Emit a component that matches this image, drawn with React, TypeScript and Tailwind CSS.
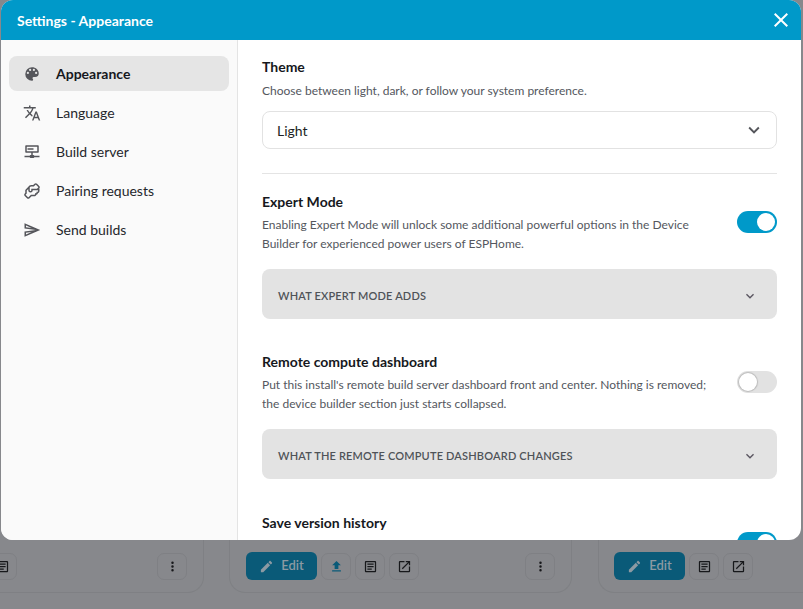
const P = {
  palette: "M17.5,12A1.5,1.5 0 0,1 16,10.5A1.5,1.5 0 0,1 17.5,9A1.5,1.5 0 0,1 19,10.5A1.5,1.5 0 0,1 17.5,12M14.5,8A1.5,1.5 0 0,1 13,6.5A1.5,1.5 0 0,1 14.5,5A1.5,1.5 0 0,1 16,6.5A1.5,1.5 0 0,1 14.5,8M9.5,8A1.5,1.5 0 0,1 8,6.5A1.5,1.5 0 0,1 9.5,5A1.5,1.5 0 0,1 11,6.5A1.5,1.5 0 0,1 9.5,8M6.5,12A1.5,1.5 0 0,1 5,10.5A1.5,1.5 0 0,1 6.5,9A1.5,1.5 0 0,1 8,10.5A1.5,1.5 0 0,1 6.5,12M12,3A9,9 0 0,0 3,12A9,9 0 0,0 12,21A1.5,1.5 0 0,0 13.5,19.5C13.5,19.11 13.35,18.76 13.11,18.5C12.88,18.23 12.73,17.88 12.73,17.5A1.5,1.5 0 0,1 14.23,16H16A5,5 0 0,0 21,11C21,6.58 16.97,3 12,3Z",
  translate: "M12.87,15.07L10.33,12.56L10.36,12.53C12.1,10.59 13.34,8.36 14.07,6H17V4H10V2H8V4H1V6H12.17C11.5,7.92 10.44,9.75 9,11.35C8.07,10.32 7.3,9.19 6.69,8H4.69C5.42,9.63 6.42,11.17 7.67,12.56L2.58,17.58L4,19L9,14L12.11,17.11L12.87,15.07M18.5,10H16.5L12,22H14L15.12,19H19.87L21,22H23L18.5,10M15.88,17L17.5,12.67L19.12,17H15.88Z",
  server: "M4,3H20A1,1 0 0,1 21,4V12A1,1 0 0,1 20,13H13V16H14A1,1 0 0,1 15,17H22V19H15A1,1 0 0,1 14,20H10A1,1 0 0,1 9,19H2V17H9A1,1 0 0,1 10,16H11V13H4A1,1 0 0,1 3,12V4A1,1 0 0,1 4,3M5,5V11H19V5H5M6,7H14V9H6V7Z",
  handshake: "M21.71 8.71C22.96 7.46 22.39 6 21.71 5.29L18.71 2.29C17.45 1.04 16 1.61 15.29 2.29L13.59 4H11C9.1 4 8 5 7.44 6.15L3 10.59V14.59L2.29 15.29C1.04 16.55 1.61 18 2.29 18.71L5.29 21.71C5.83 22.25 6.41 22.45 6.96 22.45C7.67 22.45 8.32 22.1 8.71 21.71L11.41 19H15C16.7 19 17.56 17.94 17.87 16.9C19 16.6 19.62 15.74 19.87 14.9C21.42 14.5 22 13.03 22 12V9H21.41L21.71 8.71M20 12C20 12.45 19.81 13 19 13L18 13L18 14C18 14.45 17.81 15 17 15L16 15L16 16C16 16.45 15.81 17 15 17H10.59L7.31 20.28C7 20.57 6.82 20.4 6.71 20.29L3.72 17.31C3.43 17 3.6 16.82 3.71 16.71L5 15.41V11.41L7 9.41V11C7 12.21 7.8 14 10 14S13 12.21 13 11H20V12M20.29 7.29L18.59 9H11V11C11 11.45 10.81 12 10 12S9 11.45 9 11V8C9 7.54 9.17 6 11 6H14.41L16.69 3.72C17 3.43 17.18 3.6 17.29 3.71L20.28 6.69C20.57 7 20.4 7.18 20.29 7.29Z",
  send: "M4 6.03L11.5 9.25L4 8.25L4 6.03M11.5 14.75L4 17.97V15.75L11.5 14.75M2 3V10L17 12L2 14V21L23 12L2 3Z",
  pencil: "M20.71,7.04C21.1,6.65 21.1,6 20.71,5.63L18.37,3.29C18,2.9 17.35,2.9 16.96,3.29L15.12,5.12L18.87,8.87M3,17.25V21H6.75L17.81,9.93L14.06,6.18L3,17.25Z",
  upload: "M9,16V10H5L12,3L19,10H15V16H9M5,20V18H19V20H5Z",
  dots: "M12,16A2,2 0 0,1 14,18A2,2 0 0,1 12,20A2,2 0 0,1 10,18A2,2 0 0,1 12,16M12,10A2,2 0 0,1 14,12A2,2 0 0,1 12,14A2,2 0 0,1 10,12A2,2 0 0,1 12,10M12,4A2,2 0 0,1 14,6A2,2 0 0,1 12,8A2,2 0 0,1 10,6A2,2 0 0,1 12,4Z",
  open: "M14,3V5H17.59L7.76,14.83L9.17,16.24L19,6.41V10H21V3M19,19H5V5H12V3H5C3.89,3 3,3.9 3,5V19A2,2 0 0,0 5,21H19A2,2 0 0,0 21,19V12H19V19Z",
  doc: "M5,3C3.89,3 3,3.89 3,5V19C3,20.11 3.89,21 5,21H19C20.11,21 21,20.11 21,19V5C21,3.89 20.11,3 19,3H5M5,5H19V19H5V5M7,7V9H17V7H7M7,11V13H17V11H7M7,15V17H14V15H7Z",
  close: "M19,6.41L17.59,5L12,10.59L6.41,5L5,6.41L10.59,12L5,17.59L6.41,19L12,13.41L17.59,19L19,17.59L13.41,12L19,6.41Z",
  chevron: "M7.41,8.58L12,13.17L16.59,8.58L18,10L12,16L6,10L7.41,8.58Z",
};

function Icon({ d, className }: { d: string; className?: string }) {
  return (
    <svg viewBox="0 0 24 24" fill="currentColor" className={className}>
      <path d={d} />
    </svg>
  );
}

function IconBtn({ d, color = "text-[#17181b]" }: { d: string; color?: string }) {
  return (
    <div className={`w-[30px] h-[27px] rounded-[7px] border border-[#7f8084] flex items-center justify-center ${color}`}>
      <Icon d={d} className="w-[15px] h-[15px]" />
    </div>
  );
}

function EditBtn() {
  return (
    <div className="w-[71px] h-[28px] rounded-[6px] bg-[#0a5a78] text-[#8c9aa3] flex items-center justify-center gap-[7px] text-[13px] font-semibold">
      <Icon d={P.pencil} className="w-[15px] h-[15px]" />
      <span>Edit</span>
    </div>
  );
}

const nav = [
  { label: "Appearance", d: P.palette, active: true },
  { label: "Language", d: P.translate },
  { label: "Build server", d: P.server },
  { label: "Pairing requests", d: P.handshake },
  { label: "Send builds", d: P.send },
];

function Toggle({ on }: { on: boolean }) {
  return (
    <div
      className={`w-10 h-[22px] shrink-0 rounded-full flex items-center px-[2px] ${
        on ? "bg-[#0099c9] justify-end" : "bg-[#e2e2e2] justify-start"
      }`}
    >
      <div className={`w-[18px] h-[18px] rounded-full bg-white ${on ? "" : "shadow-[0_0_1px_1px_#bbbbbb]"}`} />
    </div>
  );
}

function Disclosure({ label }: { label: string }) {
  return (
    <div className="h-[50px] mt-[16px] rounded-[8px] bg-[#e3e3e3] pl-4 pr-[19px] flex items-center justify-between">
      <span className="text-[11px] font-semibold tracking-[0.17px] text-[#4f5358] pt-[5px]">{label}</span>
      <Icon d={P.chevron} className="w-4 h-4 text-[#5a5560] mt-[3px]" />
    </div>
  );
}

function Setting({ title, lines, on }: { title: string; lines: string[]; on: boolean }) {
  return (
    <div className="flex justify-between items-start gap-4">
      <div className="flex-1 min-w-0">
        <div className="text-[14px] leading-[20px] font-bold text-[#16181d]">{title}</div>
        <div className="text-[12px] leading-[19px] text-[#54575e] mt-[3px]">
          {lines.map((l) => (
            <div key={l} className="whitespace-nowrap">{l}</div>
          ))}
        </div>
      </div>
      <div className="pt-[19px]">
        <Toggle on={on} />
      </div>
    </div>
  );
}

export default function App() {
  return (
    <div
      className="relative w-[803px] h-[609px] overflow-hidden bg-[#87888c] flex items-end pb-[16px]"
      style={{ fontFamily: 'Lato, sans-serif' }}
    >
      {/* page behind the dialog */}
      <div className="w-[204px] h-[70px] shrink-0 border-r border-b border-[#7f8084] rounded-br-[16px] flex items-end justify-between pb-[12px] pr-[16px]">
        <div className="ml-[-13px]"><IconBtn d={P.doc} /></div>
        <IconBtn d={P.dots} />
      </div>
      <div className="w-[343px] h-[70px] ml-[25px] shrink-0 border-x border-b border-[#7f8084] rounded-b-[16px] flex items-end pb-[12px] pl-[16px] pr-[16px] gap-[4px]">
        <EditBtn />
        <IconBtn d={P.upload} color="text-[#0a5a78]" />
        <IconBtn d={P.doc} />
        <IconBtn d={P.open} />
        <div className="ml-auto"><IconBtn d={P.dots} /></div>
      </div>
      <div className="w-[220px] h-[70px] ml-[26px] shrink-0 border-l border-b border-[#7f8084] rounded-bl-[16px] flex items-end pb-[12px] pl-[15px] gap-[4px]">
        <EditBtn />
        <IconBtn d={P.doc} />
        <IconBtn d={P.open} />
      </div>

      {/* dialog */}
      <div className="absolute left-[1px] top-0 w-[800px] h-[540px] rounded-[12px] overflow-hidden bg-white flex flex-col">
        <div className="h-[40px] shrink-0 bg-[#0099c9] text-white flex items-center justify-between pl-4 pr-[8px]">
          <span className="text-[14px] font-bold">Settings - Appearance</span>
          <Icon d={P.close} className="w-6 h-6" />
        </div>
        <div className="flex-1 flex min-h-0">
          <div className="w-[237px] shrink-0 bg-[#fafafa] border-r border-[#e4e4e4] pl-2 pr-2 pt-4 flex flex-col gap-[4px]">
            {nav.map((n) => (
              <div
                key={n.label}
                className={`h-[35px] rounded-[8px] pl-[14px] flex items-center gap-[15px] text-[14px] ${
                  n.active ? "bg-[#e5e5e5] font-bold text-[#16181d]" : "text-[#25272c]"
                }`}
              >
                <Icon d={n.d} className="w-[18px] h-[18px] text-[#55565b] shrink-0" />
                <span>{n.label}</span>
              </div>
            ))}
          </div>
          <div className="flex-1 min-w-0 overflow-hidden pl-[24px] pr-[24px] pt-[17px]">
            <div className="text-[14px] leading-[20px] font-bold text-[#16181d]">Theme</div>
            <div className="text-[12px] leading-[19px] text-[#54575e] mt-[4px]">
              Choose between light, dark, or follow your system preference.
            </div>
            <div className="mt-[11px] h-[38px] rounded-[8px] border border-[#e2e2e2] pl-[14px] pr-[11px] flex items-center justify-between text-[14px] text-[#1d1f24]">
              <span>Light</span>
              <Icon d={P.chevron} className="w-[22px] h-[22px] text-[#55565b]" />
            </div>
            <div className="h-px bg-[#e4e4e4] mt-[24px] mb-[18px]" />
            <Setting
              title="Expert Mode"
              on
              lines={[
                "Enabling Expert Mode will unlock some additional powerful options in the Device",
                "Builder for experienced power users of ESPHome.",
              ]}
            />
            <Disclosure label="WHAT EXPERT MODE ADDS" />
            <div className="h-[33px]" />
            <Setting
              title="Remote compute dashboard"
              on={false}
              lines={[
                "Put this install's remote build server dashboard front and center. Nothing is removed;",
                "the device builder section just starts collapsed.",
              ]}
            />
            <Disclosure label="WHAT THE REMOTE COMPUTE DASHBOARD CHANGES" />
            <div className="h-[34px]" />
            <Setting title="Save version history" on lines={[]} />
          </div>
        </div>
      </div>
    </div>
  );
}
